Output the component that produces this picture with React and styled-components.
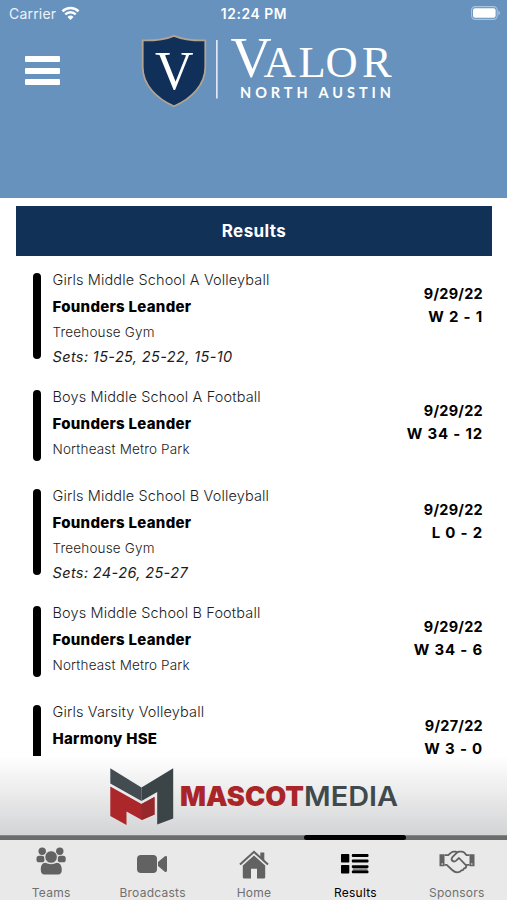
import { useState } from 'react';
import styled, { createGlobalStyle } from 'styled-components';

const games = [
  {
    team: 'Girls Middle School A Volleyball',
    opponent: 'Founders Leander',
    place: 'Treehouse Gym',
    sets: 'Sets: 15-25, 25-22, 15-10',
    date: '9/29/22',
    score: 'W 2 - 1',
  },
  {
    team: 'Boys Middle School A Football',
    opponent: 'Founders Leander',
    place: 'Northeast Metro Park',
    date: '9/29/22',
    score: 'W 34 - 12',
  },
  {
    team: 'Girls Middle School B Volleyball',
    opponent: 'Founders Leander',
    place: 'Treehouse Gym',
    sets: 'Sets: 24-26, 25-27',
    date: '9/29/22',
    score: 'L 0 - 2',
  },
  {
    team: 'Boys Middle School B Football',
    opponent: 'Founders Leander',
    place: 'Northeast Metro Park',
    date: '9/29/22',
    score: 'W 34 - 6',
  },
  {
    team: 'Girls Varsity Volleyball',
    opponent: 'Harmony HSE',
    date: '9/27/22',
    score: 'W 3 - 0',
  },
];

const tabs = [
  { name: 'Teams', icon: <TeamsIcon />, iconTop: 7 },
  { name: 'Broadcasts', icon: <CameraIcon />, iconTop: 14 },
  { name: 'Home', icon: <HomeIcon />, iconTop: 10 },
  { name: 'Results', icon: <ListIcon />, iconTop: 14 },
  { name: 'Sponsors', icon: <HandshakeIcon />, iconTop: 10 },
];

export default function App() {
  const [activeTab, setActiveTab] = useState('Results');

  return (
    <Screen>
      <GlobalStyle />
      <Header>
        <StatusBar>
          <Carrier>
            Carrier
            <WifiIcon />
          </Carrier>
          <Time>12:24 PM</Time>
          <BatteryIcon />
        </StatusBar>
        <Brand>
          <MenuButton aria-label="Menu">
            <span />
            <span />
            <span />
          </MenuButton>
          <ValorLogo />
        </Brand>
      </Header>

      <Content>
        <Title>Results</Title>
        {games.map((game) => (
          <Game key={game.team} sets={game.sets}>
            <Bar />
            <Info>
              <Team>{game.team}</Team>
              <Opponent>{game.opponent}</Opponent>
              {game.place && <Place>{game.place}</Place>}
              {game.sets && <Sets>{game.sets}</Sets>}
            </Info>
            <Outcome>
              <span>{game.date}</span>
              <Score>{game.score}</Score>
            </Outcome>
          </Game>
        ))}
      </Content>

      <SponsorBanner>
        <MascotLogo />
      </SponsorBanner>

      <TabBar>
        {tabs.map((tab) => (
          <Tab
            key={tab.name}
            active={tab.name === activeTab ? 1 : 0}
            $iconTop={tab.iconTop}
            onClick={() => setActiveTab(tab.name)}
          >
            <div className="line" />
            <div className="icon">{tab.icon}</div>
            <span className="name">{tab.name}</span>
          </Tab>
        ))}
      </TabBar>
    </Screen>
  );
}

function WifiIcon() {
  return (
    <svg width="19" height="15" viewBox="0 0 20 16" fill="none" stroke="#fff" strokeWidth="2.7">
      <path d="M1.4 5.7a12.4 12.4 0 0 1 17.2 0" />
      <path d="M4.4 9a8 8 0 0 1 11.2 0" />
      <path d="M10 15 6.8 11.6a4.6 4.6 0 0 1 6.4 0z" fill="#fff" stroke="none" />
    </svg>
  );
}

function BatteryIcon() {
  return (
    <svg width="30" height="14" viewBox="0 0 30 14">
      <rect x="0.6" y="0.6" width="25.6" height="12.8" rx="3.6" fill="none" stroke="#a9c4dd" strokeWidth="1.1" />
      <rect x="2" y="2.2" width="22.6" height="9.6" rx="2" fill="#fff" />
      <path d="M27.4 4.8c2 .6 2 3.8 0 4.4z" fill="#a9c4dd" />
    </svg>
  );
}

function ValorLogo() {
  return (
    <svg width="252" height="76" viewBox="141 33 252 76">
      <path
        d="M174 35.8c9 3.8 20 4.8 31.3 4.6v26.6c0 18-14 31.5-31.3 39.3c-17.3-7.8-31.3-21.3-31.3-39.3V40.4c11.3.2 22.3-.8 31.3-4.6z"
        fill="#10305a"
        stroke="#b3a392"
        strokeWidth="1.8"
      />
      <LogoSerif x="155" y="89" fontSize="55" textLength="38.5" lengthAdjust="spacingAndGlyphs">
        V
      </LogoSerif>
      <rect x="216" y="40" width="1.7" height="58.5" fill="#dfe9f3" />
      <LogoSerif y="77" fontSize="57">
        <tspan x="230.5">V</tspan>
        <tspan x="263.5 298.5 325.5 362" fontSize="44.5">
          ALOR
        </tspan>
      </LogoSerif>
      <LogoSans x="240" y="98.3" textLength="151" lengthAdjust="spacing">
        NORTH AUSTIN
      </LogoSans>
    </svg>
  );
}

function MascotLogo() {
  return (
    <svg width="290" height="60" viewBox="109 767 290 60">
      <path d="M110.3 768.3 141.5 787.5V801L110.3 783.5z" fill="#434c51" />
      <path d="M141.5 787.5 173.2 768.3V818.5L157.2 824.5V792L141.5 801z" fill="#3b4548" />
      <path d="M110.3 786.5 141.5 804 154.5 797V814.5L141.8 820 126.5 811.5V825L110.3 816z" fill="#ac2729" />
      <path d="M141.5 804 154.5 797V814.5L141.8 820z" fill="#96282b" />
      <MascotText x="180" y="806" weight="900" fill="#a92529" textLength="124" lengthAdjust="spacingAndGlyphs">
        MASCOT
      </MascotText>
      <MascotText x="304" y="806" weight="600" fill="#3f4a4c" textLength="94" lengthAdjust="spacingAndGlyphs">
        MEDIA
      </MascotText>
    </svg>
  );
}

function TeamsIcon() {
  return (
    <svg width="30" height="28" viewBox="36.5 847 30 28" fill="currentColor">
      <circle cx="42.7" cy="851.3" r="3.7" />
      <circle cx="60.3" cy="851.3" r="3.7" />
      <rect x="37" y="855.7" width="8" height="6.6" rx="2.6" />
      <rect x="58.2" y="855.7" width="8" height="6.6" rx="2.6" />
      <circle cx="51.6" cy="857" r="6.3" stroke="#e9e9e9" />
      <path d="M46 862.8c3 1.8 8.2 1.8 11.2 0 3.4 0 5.1 3 5.1 7.2 0 3-1.3 4.4-3.6 4.4H44.9c-2.3 0-3.6-1.4-3.6-4.4 0-4.2 1.3-7.2 4.7-7.2z" />
    </svg>
  );
}

function CameraIcon() {
  return (
    <svg width="31" height="20" viewBox="0.5 0 31 20" fill="currentColor">
      <rect x="0.5" y="1" width="20" height="18" rx="4" />
      <path d="M21.5 8 28 2.600c1.300-1 2.500-.6 2.500.8v13.200c0 1.400-1.200 1.800-2.500.8L21.500 12z" />
    </svg>
  );
}

function HomeIcon() {
  return (
    <svg width="30" height="29" viewBox="0 0 30 29">
      <path d="M21.3 2.500h4v9l-4-4z" fill="currentColor" />
      <path d="M1 14.500 15 1.800l14 12.700" fill="none" stroke="currentColor" strokeWidth="2.1" />
      <path
        d="M3.800 15.500 15 5.500l11.200 10v11.700q0 1.400-1.400 1.400H18v-9.800h-6v9.800H5.200q-1.400 0-1.400-1.400z"
        fill="currentColor"
      />
    </svg>
  );
}

function ListIcon() {
  return (
    <svg width="28" height="20" viewBox="0 0 28 20" fill="currentColor">
      <rect width="8.3" height="8.5" rx="0.8" />
      <rect y="11" width="8.3" height="8.5" rx="0.8" />
      <rect x="10.8" width="16.7" height="3" rx="1" />
      <rect x="10.8" y="5.4" width="16.7" height="3" rx="1" />
      <rect x="11.800" y="13" width="14.7" height="4.5" fill="#8b8b8b" />
      <rect x="10.8" y="11.2" width="16.7" height="2.7" rx="1" />
      <rect x="10.8" y="16.6" width="16.7" height="2.7" rx="1" />
    </svg>
  );
}

function HandshakeIcon() {
  return (
    <svg width="36" height="24" viewBox="0 0 36 24" fill="none" stroke="currentColor" strokeWidth="1.8" strokeLinejoin="round">
      <path d="M.5 4.300h5v12h-5zM30.500 4.300h5v12h-5z" fill="currentColor" stroke="none" />
      <circle cx="3.200" cy="14" r="0.800" fill="#e9e9e9" stroke="none" />
      <circle cx="32.800" cy="14" r="0.800" fill="#e9e9e9" stroke="none" />
      <path d="M5.500 5.200h3.500l3.500-2.800q1-.8 2.300-.8h1.700l1.700.8 1.700-.8h2.800q1.300 0 2.300.8l2.500 2.800h3" />
      <path d="M5.500 14.800h2.200l5.500 5.200q3 2.800 6 2.200 2-.2 3-1.700 2.200 0 2.800-2 2.300-.2 2.300-2.800l.6-.9h2.600" />
      <path d="M18.200 2.400 13.400 7.200q-1.600 2 0 3.600 1.800 1.400 3.700-.2l2.900-2.600 7.300 7.700" />
    </svg>
  );
}

const GlobalStyle = createGlobalStyle`
  * {
    box-sizing: border-box;
  }

  body {
    margin: 0;
    font-family: 'Inter', sans-serif;
  }

  svg {
    display: block;
    flex-shrink: 0;
  }
`;

const Screen = styled.div`
  height: 100vh;
  width: 100%;
  display: flex;
  flex-direction: column;
  overflow: hidden;
  background-color: #fff;
`;

const Header = styled.header`
  height: 198px;
  flex-shrink: 0;
  background-color: #6792bd;
  color: #fff;
`;

const StatusBar = styled.div`
  height: 27px;
  padding: 0 6px 0 9px;
  display: grid;
  grid-template-columns: 1fr auto 1fr;
  align-items: center;

  > svg {
    justify-self: end;
    margin-bottom: 1px;
  }
`;

const Carrier = styled.div`
  display: flex;
  align-items: center;
  gap: 5px;
  font-size: 14px;
  letter-spacing: 0.2px;
  color: #edf3f9;

  svg {
    margin-bottom: 1px;
  }
`;

const Time = styled.span`
  font-size: 13.8px;
  font-weight: 600;
  letter-spacing: 0.6px;
  margin-right: 2px;
`;

const Brand = styled.div`
  padding: 6px 0 0 25px;
  display: flex;
  align-items: flex-start;
  gap: 81px;
`;

const MenuButton = styled.button`
  width: 35px;
  margin-top: 23px;
  padding: 0;
  display: flex;
  flex-direction: column;
  gap: 5.5px;
  background: none;
  border: none;
  cursor: pointer;

  span {
    height: 6px;
    border-radius: 1px;
    background-color: #fff;
  }
`;

const LogoSerif = styled.text`
  font-family: 'Liberation Serif', serif;
  fill: #fff;
`;

const LogoSans = styled.text`
  font-family: 'Lato', sans-serif;
  font-size: 14.5px;
  font-weight: 700;
  fill: #fff;
`;

const MascotText = styled.text`
  font-size: 27.5px;
  font-weight: ${(props) => props.weight};
`;

const Content = styled.main`
  flex: 1;
  min-height: 0;
  padding: 8px 15px 0 16px;
  overflow: hidden;
`;

const Title = styled.h1`
  height: 50px;
  margin: 0 0 17px;
  display: flex;
  align-items: center;
  justify-content: center;
  background-color: #113157;
  color: #fff;
  font-size: 17px;
  font-weight: 700;
  letter-spacing: 0.4px;
`;

const Game = styled.article`
  height: ${(props) => (props.sets ? '86px' : '71px')};
  margin-bottom: ${(props) => (props.sets ? '31px' : '28px')};
  padding: 0 9px 0 16.5px;
  display: flex;
`;

const Bar = styled.div`
  width: 8px;
  flex-shrink: 0;
  border-radius: 4px;
  background-color: #000;
`;

const Info = styled.div`
  flex: 1;
  padding-left: 12px;
  display: flex;
  flex-direction: column;
  white-space: nowrap;
`;

const Team = styled.span`
  height: 20px;
  margin-top: -3px;
  line-height: 20px;
  font-size: 14.5px;
  font-weight: 300;
  letter-spacing: 0.13px;
  color: #1c1c1c;
`;

const Opponent = styled.span`
  margin-top: 7px;
  line-height: 20px;
  font-size: 15px;
  font-weight: 800;
  letter-spacing: 0.28px;
  color: #000;
`;

const Place = styled.span`
  margin-top: 5px;
  line-height: 20px;
  font-size: 13.5px;
  font-weight: 300;
  letter-spacing: 0.17px;
  color: #1c1c1c;
`;

const Sets = styled.span`
  margin-top: 5px;
  line-height: 20px;
  font-size: 14.5px;
  font-style: italic;
  letter-spacing: 0.37px;
  color: #1c1c1c;
`;

const Outcome = styled.div`
  padding-top: 10px;
  display: flex;
  flex-direction: column;
  align-items: flex-end;
  line-height: 22.5px;
  font-size: 14.5px;
  font-weight: 650;
  letter-spacing: 0.25px;
  color: #000;
`;

const Score = styled.span`
  font-size: 15px;
  letter-spacing: 0.8px;
`;

const SponsorBanner = styled.aside`
  height: 79px;
  flex-shrink: 0;
  padding-top: 11px;
  display: flex;
  justify-content: center;
  background: linear-gradient(#fff, #f0f0f0 35%, #d3d4d6);
`;

const TabBar = styled.nav`
  height: 65px;
  flex-shrink: 0;
  display: grid;
  grid-template-columns: repeat(5, 1fr);
  background: linear-gradient(#858686 1px, #6b6c6c 1px, #6b6c6c 5px, #e9e9e9 5px);
`;

const Tab = styled.button`
  padding: 0;
  display: flex;
  flex-direction: column;
  align-items: center;
  background: none;
  border: none;
  font-family: inherit;
  color: ${(props) => (props.active ? '#000' : '#626262')};
  cursor: pointer;

  .line {
    width: 100%;
    height: 5px;
    border-radius: 3px;
    background-color: ${(props) => props.active && '#000'};
  }

  .icon {
    height: 44px;
    padding-top: ${(props) => props.$iconTop}px;
    margin-left: 1px;
  }

  .name {
    line-height: 18px;
    font-size: 12px;
    letter-spacing: 0.25px;
    padding-left: 1px;
    color: ${(props) => (props.active ? '#000' : '#707070')};
  }
`;
